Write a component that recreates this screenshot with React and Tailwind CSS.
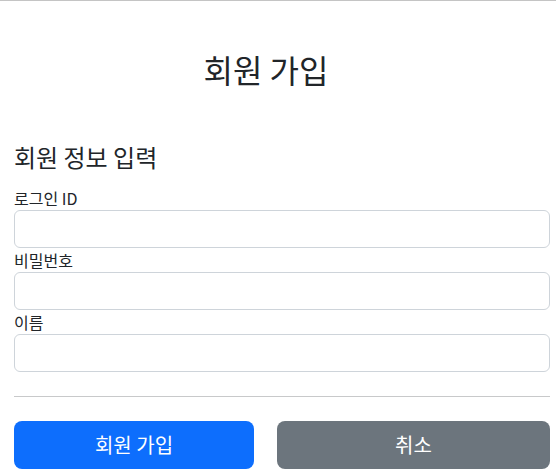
export default function App() {
  const fields = ['로그인 ID', '비밀번호', '이름']

  return (
    <div
      className="min-h-screen border-t border-[#c4c4c4] bg-white pl-[14px] pr-[6px] text-[#212529]"
      style={{ fontFamily: '"Noto Sans CJK KR", "Noto Sans", sans-serif' }}
    >
      <div className="pt-[49px] pr-[32px] text-center">
        <h2 className="text-[32px] font-normal leading-[38px]">회원 가입</h2>
      </div>

      <h4 className="mt-[54px] text-[24px] font-normal leading-[29px]">회원 정보 입력</h4>

      <form className="mt-[15px]">
        {fields.map((label) => (
          <div key={label}>
            <label className="block text-[16px] leading-[24px]">{label}</label>
            <input
              type="text"
              className="block h-[38px] w-full rounded-[6px] border border-[#ced4da] bg-white px-3 outline-none"
            />
          </div>
        ))}

        <hr className="my-6 border-t border-[#c8c9ca]" />

        <div className="flex gap-[23px]">
          <button
            type="button"
            className="h-[48px] w-[240px] rounded-[8px] bg-[#0d6efd] text-[20px] text-white"
          >
            회원 가입
          </button>
          <button
            type="button"
            className="h-[48px] flex-1 rounded-[8px] bg-[#6c757d] text-[20px] text-white"
          >
            취소
          </button>
        </div>
      </form>
    </div>
  )
}
